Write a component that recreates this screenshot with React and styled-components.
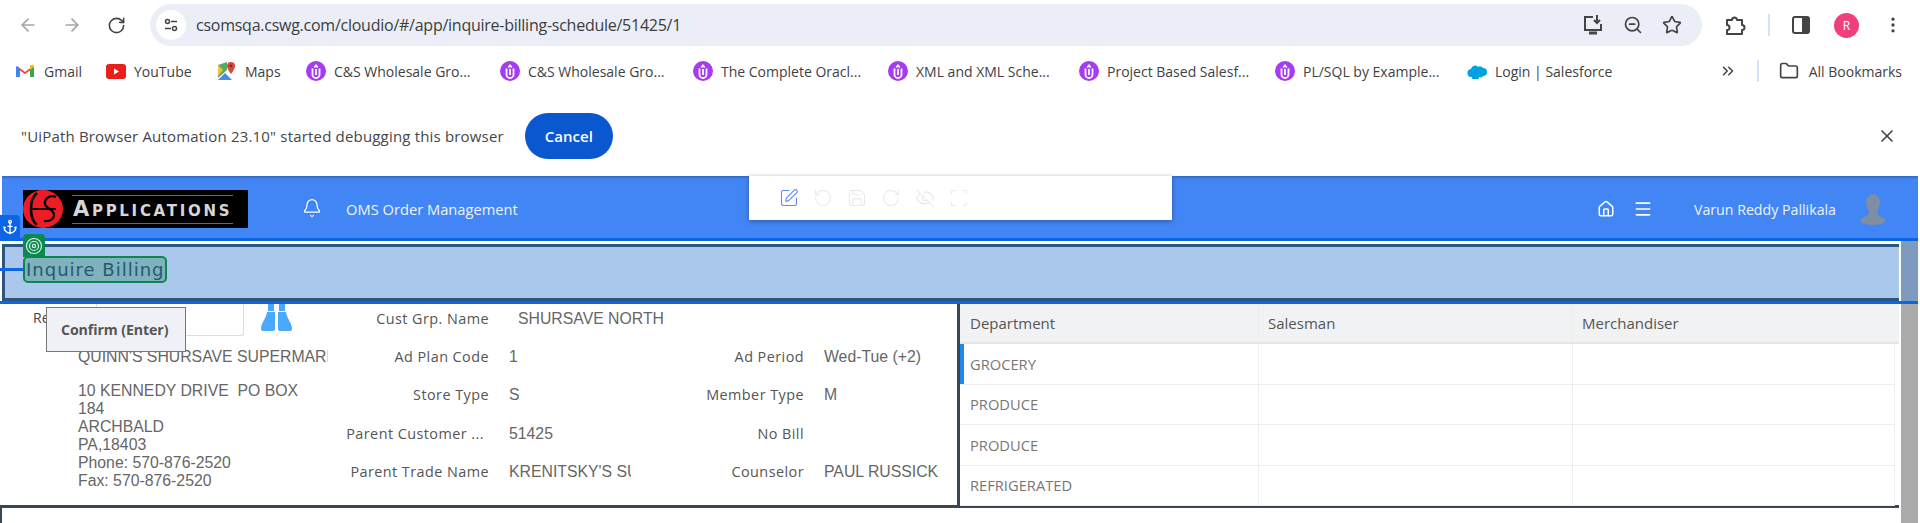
import React from 'react';
import styled, { createGlobalStyle } from 'styled-components';
import {
    ArrowLeft, ArrowRight, RotateCw, RotateCcw, ZoomOut, Star, X, Folder,
    ChevronsRight, Bell, Home, Menu, SquarePen, Save, EyeOff, Scan, Anchor, MoreVertical,
} from 'lucide-react';

const GlobalStyle = createGlobalStyle`
    html, body {
        margin: 0;
        background: #fff;
    }
    body {
        width: 1920px;
        height: 523px;
        overflow: hidden;
        font-family: "Open Sans", sans-serif;
    }
`;

const Page = styled.div`
    position: relative;
    width: 1920px;
    height: 523px;
    overflow: hidden;
`;

/* browser chrome */
const Toolbar = styled.div`
    display: flex;
    align-items: center;
    height: 50px;
    box-sizing: border-box;
    padding-left: 18px;
    color: #5f6368;
`;

const NavIcon = styled.span`
    display: flex;
    justify-content: center;
    width: 20px;
    margin-right: 24px;
    color: ${p => p.$color || '#a3a5a8'};
`;

const AddressBar = styled.div`
    display: flex;
    align-items: center;
    width: 1552px;
    height: 42px;
    border-radius: 21px;
    background: #ebeef7;
    box-sizing: border-box;
    padding: 0 20px 0 6px;
`;

const SiteBadge = styled.span`
    display: flex;
    align-items: center;
    justify-content: center;
    width: 30px;
    height: 30px;
    border-radius: 50%;
    background: #fff;
    margin-right: 10px;
`;

const Url = styled.span`
    flex: 1;
    font-size: 16px;
    color: #3b3d40;
    letter-spacing: -0.25px;
`;

const BarIcons = styled.div`
    display: flex;
    align-items: center;
    gap: 19px;
    color: #444;
`;

const ToolIcons = styled.div`
    display: flex;
    align-items: center;
    margin-left: 22px;
    color: #444;
`;

const Divider = styled.span`
    width: 2px;
    height: 22px;
    background: #d3e3fd;
    margin: 0 ${p => p.$mx || 22}px;
`;

const ProfileDot = styled.span`
    display: flex;
    align-items: center;
    justify-content: center;
    width: 25px;
    height: 25px;
    border-radius: 50%;
    background: #ef3f7c;
    color: #fff;
    font-size: 12px;
    margin: 0 24px;
`;

const Bookmarks = styled.div`
    display: flex;
    align-items: center;
    height: 42px;
    padding-left: 16px;
    box-sizing: border-box;
`;

const Bookmark = styled.div`
    display: flex;
    align-items: center;
    gap: 8px;
    width: ${p => p.$w}px;
    flex: none;
    font-size: 14px;
    color: #3f4145;
    white-space: nowrap;
`;

const IconSlot = styled.span`
    display: flex;
    align-items: center;
    width: 20px;
    flex: none;
`;

const BookmarkEnd = styled.div`
    display: flex;
    align-items: center;
    margin-left: auto;
    padding-right: 18px;
    font-size: 14px;
    color: #3f4145;
    gap: 10px;
`;

const InfoBar = styled.div`
    display: flex;
    align-items: center;
    height: 84px;
    padding: 4px 23px 0 21px;
    box-sizing: border-box;
    font-size: 15px;
    letter-spacing: .18px;
    color: #44474a;
`;

const CancelButton = styled.button`
    width: 88px;
    height: 46px;
    margin-left: 21px;
    margin-right: auto;
    border: 0;
    border-radius: 23px;
    background: #0b57d0;
    color: #fff;
    font-family: "Open Sans", sans-serif;
    font-size: 15px;
    font-weight: 600;
`;

/* app header */
const AppFrame = styled.div`
    margin-left: 2px;
    width: 1916px;
`;

const AppHeader = styled.header`
    display: flex;
    align-items: center;
    height: 62px;
    padding-left: 21px;
    box-sizing: border-box;
    background: #4285f4;
    color: #fff;
    font-size: 14.7px;
    box-shadow: inset 0 3px 3px -2px rgba(30, 60, 120, .5);
`;

const Logo = styled.div`
    display: flex;
    align-items: center;
    width: 225px;
    height: 38px;
    flex: none;
    background: #000;
    margin-top: 4px;
`;

const LogoWord = styled.div`
    margin-left: 9px;
    width: 161px;
    box-sizing: border-box;
    padding: 4px 0 4px 1px;
    border-top: 1px solid #666;
    border-bottom: 1px solid #666;
    font-family: "DejaVu Sans", sans-serif;
    font-weight: 700;
    font-size: 21px;
    font-variant: small-caps;
    letter-spacing: 2.7px;
    line-height: 19px;
    color: #d6d6d6;
    white-space: nowrap;
`;

const BellSlot = styled.span`
    display: flex;
    margin-left: 54px;
    margin-top: 2px;
`;

const ModuleName = styled.span`
    margin-left: 24px;
    margin-top: 4px;
    color: #eef4ff;
`;

const EditTools = styled.div`
    display: flex;
    align-items: center;
    gap: 14px;
    width: 423px;
    height: 44px;
    flex: none;
    align-self: flex-start;
    box-sizing: border-box;
    padding-left: 30px;
    margin-left: 231px;
    background: #fff;
    box-shadow: 0 1px 5px rgba(0, 0, 0, .35);
`;

const EditIcon = styled.span`
    display: flex;
    color: ${p => (p.$active ? '#5b8def' : '#e9e9e9')};
`;

const HeaderRight = styled.div`
    display: flex;
    align-items: center;
    margin-left: auto;
    margin-top: 4px;
    padding-right: 32px;
`;

const MenuSlot = styled.span`
    display: flex;
    margin-left: 18px;
`;

const UserName = styled.span`
    margin: 0 24px 0 41px;
    font-size: 14.2px;
    color: #eef4ff;
`;

/* title band, framed by the automation highlight */
const TitleBand = styled.div`
    position: relative;
    z-index: 2;
    height: 66px;
    box-sizing: border-box;
    border-top: 3px solid #0a66e4;
    border-bottom: 3px solid #0a66e4;
    padding: 3px 19px 0 0;
    background: #fff;
    margin-left: -2px;
`;

const BandInner = styled.div`
    height: 57px;
    box-sizing: border-box;
    border: 3px solid #2e5480;
    border-right: 0;
    background: #a9c8ec;
    margin-left: 2px;
`;

const ScrollPart = styled.div`
    position: absolute;
    right: 0;
    top: 0;
    bottom: 0;
    width: 17px;
    background: #7d9bbf;
`;

const Title = styled.div`
    position: absolute;
    left: 23px;
    top: 15px;
    width: 144px;
    height: 27px;
    box-sizing: border-box;
    border: 2.5px solid #0e8552;
    border-radius: 5px;
    background: #7fb2bc;
    color: #245a70;
    font-family: "DejaVu Sans", sans-serif;
    font-size: 18px;
    line-height: 24px;
    padding-left: 1px;
    letter-spacing: 1px;
    white-space: nowrap;
`;

const Connector = styled.span`
    position: absolute;
    left: 0;
    top: 27px;
    width: 23px;
    height: 3px;
    background: #0a66e4;
`;

const AnchorTag = styled.span`
    position: absolute;
    z-index: 3;
    left: 0;
    top: 215px;
    width: 20px;
    height: 24px;
    display: flex;
    align-items: center;
    justify-content: center;
    background: #0a66e4;
    color: #fff;
    border-radius: 0 4px 0 0;
`;

const TargetTag = styled.span`
    position: absolute;
    z-index: 3;
    left: 23px;
    top: 234px;
    width: 22px;
    height: 23px;
    display: flex;
    align-items: center;
    justify-content: center;
    background: #0b8a50;
    border-radius: 4px 4px 0 0;
`;

/* record */
const Lower = styled.div`
    display: flex;
    height: 219px;
`;

const LowerMain = styled.div`
    width: 1897px;
    flex: none;
`;

const Content = styled.div`
    display: flex;
    height: 201px;
    background: #fff;
`;

const LeftPane = styled.div`
    display: flex;
    width: 955px;
    flex: none;
    overflow: hidden;
`;

const CustomerCol = styled.div`
    width: 336px;
    flex: none;
`;

const SearchRow = styled.div`
    display: flex;
    align-items: flex-start;
    height: 32px;
    padding-left: 31px;
    font-size: 14px;
    line-height: 28px;
    color: #444;
`;

const RefInput = styled.div`
    width: 148px;
    height: 32px;
    box-sizing: border-box;
    margin-left: 46px;
    margin-right: 17px;
    border: 1px solid #ddd;
    border-top: 0;
    border-radius: 0 0 3px 3px;
`;

const CustomerName = styled.div`
    width: 250px;
    margin: 12px 0 0 76px;
    font-family: "Liberation Sans", sans-serif;
    font-size: 15.8px;
    line-height: 18px;
    color: #666;
    white-space: nowrap;
    overflow: hidden;
`;

const Address = styled.div`
    width: 228px;
    margin: 16px 0 0 76px;
    font-family: "Liberation Sans", sans-serif;
    font-size: 15.8px;
    line-height: 18px;
    color: #666;
`;

const FieldGrid = styled.div`
    display: grid;
    grid-template-columns: 151px 142px 173px 150px;
    grid-auto-rows: 38.3px;
    align-items: center;
    margin-top: -5px;
    flex: none;
`;

const FieldLabel = styled.div`
    text-align: right;
    font-size: 14.4px;
    letter-spacing: .45px;
    color: #555;
    white-space: nowrap;
    overflow: hidden;
    padding-right: ${p => p.$pr || 0}px;
`;

const FieldValue = styled.div`
    grid-column: ${p => p.$span ? 'span 3' : 'auto'};
    padding-left: ${p => p.$pl || 20}px;
    padding-top: 1px;
    font-family: "Liberation Sans", sans-serif;
    font-size: 15.8px;
    color: #666;
    white-space: nowrap;
    overflow: hidden;
`;

const PaneRule = styled.div`
    width: 3px;
    flex: none;
    background: #3a4656;
`;

const DeptTable = styled.div`
    width: 939px;
    flex: none;
`;

const Row = styled.div`
    display: grid;
    grid-template-columns: 298px 314px 1fr;
    height: ${p => (p.$head ? 40 : 40.5)}px;
    box-sizing: border-box;
    background: ${p => (p.$head ? '#f1f2f4' : '#fff')};
    border-bottom: ${p => (p.$head ? '2px solid #e4e5e8' : '1px solid #eeeeee')};
    border-right: ${p => (p.$head ? '0' : '1px solid #eeeeee')};
    margin-right: ${p => (p.$head ? 0 : 4)}px;
    color: ${p => (p.$head ? '#555' : '#777')};
`;

const Cell = styled.div`
    display: flex;
    align-items: center;
    padding-left: ${p => (p.$first && !p.$mark ? 10 : p.$mark ? 6 : 9)}px;
    border-left: ${p => (p.$mark ? '4px solid #1e88f0' : p.$first ? '0' : '1px solid #eeeeee')};
    font-size: ${p => (p.$head ? 15 : 14.7)}px;
    white-space: nowrap;
`;

const ScrollRail = styled.div`
    width: 17px;
    flex: none;
    margin-left: 2px;
    background: #aaaaaa;
`;

const Footer = styled.div`
    height: 18px;
    box-sizing: border-box;
    border-top: 3px solid #3a4656;
    border-left: 2px solid #3a4656;
    margin-left: -2px;
`;

const Tooltip = styled.div`
    position: absolute;
    z-index: 4;
    left: 46px;
    top: 307px;
    width: 140px;
    height: 45px;
    box-sizing: border-box;
    display: flex;
    align-items: center;
    padding-left: 14px;
    border: 1px solid #777;
    background: #f0f1f7;
    color: #555;
    font-size: 14.2px;
    font-weight: 700;
    letter-spacing: -.1px;
`;

const GmailIcon = () => (
    <svg width="18" height="14" viewBox="0 0 18 14">
        <path d="M1 13V2l8 6 8-6v11h-3V6.5L9 10 4 6.5V13z" fill="#ea4335" />
        <path d="M0 13V2l4 2.8V13z" fill="#4285f4" />
        <path d="M18 13V2l-4 2.8V13z" fill="#34a853" />
        <path d="M14 1.5c2-1.5 4-1 4 1V3l-4 3z" fill="#fbbc04" />
    </svg>
);

const YouTubeIcon = () => (
    <svg width="20" height="15" viewBox="0 0 20 15">
        <rect x="0" y="0" width="20" height="15" rx="3" fill="#e8201a" />
        <path d="M8 4.5l5 3-5 3z" fill="#fff" />
    </svg>
);

const MapsIcon = () => (
    <svg width="19" height="20" viewBox="0 0 19 20">
        <path d="M1 4l9-3v8l-9 8z" fill="#4fae62" />
        <path d="M1 19l7-7 7 7z" fill="#4a8ae8" />
        <path d="M1 4l5 5-5 6z" fill="#f3c33c" />
        <path d="M14 1a4 4 0 0 1 4 4c0 3-4 8-4 8s-4-5-4-8a4 4 0 0 1 4-4z" fill="#d9493a" />
        <circle cx="14" cy="5" r="1.4" fill="#8c2a20" />
    </svg>
);

const PurpleIcon = () => (
    <svg width="20" height="20" viewBox="0 0 20 20">
        <circle cx="10" cy="10" r="10" fill="#a63cf0" />
        <path d="M6.5 7.5v6a3.5 3.5 0 0 0 7 0v-6" fill="none" stroke="#fff" strokeWidth="1.8" />
        <path d="M10 8v6M8.3 6.5L10 4.5l1.7 2" fill="none" stroke="#fff" strokeWidth="1.8" />
    </svg>
);

const CloudIcon = () => (
    <svg width="20" height="16" viewBox="0 0 20 16">
        <path d="M5 14a4 4 0 0 1-1-8 4 4 0 0 1 7-2 3.5 3.5 0 0 1 5 1 4 4 0 0 1 0 8 3 3 0 0 1-4 1 3.5 3.5 0 0 1-7 0z" fill="#00a1e0" />
    </svg>
);

const TuneIcon = () => (
    <svg width="16" height="16" viewBox="0 0 16 16" fill="none" stroke="#444" strokeWidth="1.5">
        <circle cx="4.5" cy="4.5" r="2" />
        <path d="M8 4.5h6" />
        <circle cx="11.5" cy="11.5" r="2" />
        <path d="M2 11.5h6" />
    </svg>
);

const InstallIcon = () => (
    <svg width="22" height="22" viewBox="0 0 22 22" fill="none" stroke="#444" strokeWidth="2">
        <path d="M11 3H3v13h16v-6" />
        <path d="M15 1v8M12 6l3 3 3-3" />
        <path d="M7 19h8" strokeWidth="3" />
    </svg>
);

const ExtensionIcon = () => (
    <svg width="22" height="22" viewBox="0 0 22 22" fill="none" stroke="#444" strokeWidth="2" strokeLinejoin="round">
        <path d="M3 6h5a2.5 2.5 0 0 1 5 0h5v5a2.5 2.5 0 0 1 0 5v4H3v-4a2.5 2.5 0 0 0 0-5z" />
    </svg>
);

const SidePanelIcon = () => (
    <svg width="18" height="18" viewBox="0 0 18 18">
        <rect x="1" y="1" width="16" height="16" rx="2" fill="#fff" stroke="#444" strokeWidth="2" />
        <rect x="10" y="1" width="7" height="16" fill="#444" />
    </svg>
);

const BinocularsIcon = () => (
    <svg width="31" height="27" viewBox="0 0 31 27" fill="#4aa8ff">
        <path d="M7 0h6v7H7zM18 0h6v7h-6z" />
        <path d="M6 8h8v17a2 2 0 0 1-2 2H2a2 2 0 0 1-2-2c0-6 5-10 6-17zM17 8h8c1 7 6 11 6 17a2 2 0 0 1-2 2H19a2 2 0 0 1-2-2z" />
    </svg>
);

const TargetIcon = () => (
    <svg width="18" height="18" viewBox="0 0 18 18" fill="none" stroke="#d8efe4" strokeWidth="1.2">
        <circle cx="9" cy="9" r="7.5" />
        <circle cx="9" cy="9" r="4.5" />
        <circle cx="9" cy="9" r="1.6" />
    </svg>
);

const AvatarIcon = () => (
    <svg width="26" height="31" viewBox="0 0 26 31" fill="#7f8ea3">
        <ellipse cx="13" cy="9" rx="7" ry="9" />
        <path d="M9 16h8l1 5c3 2 7 3 8 6-3 3-8 4-13 4S3 30 0 27c1-3 5-4 8-6z" />
    </svg>
);

const CsLogo = () => (
    <svg width="40" height="38" viewBox="0 0 40 38" style={{ flex: 'none' }}>
        <ellipse cx="20" cy="19" rx="20" ry="19" fill="#ee1c25" />
        <path d="M14 3C6 9 6 29 14 35" fill="none" stroke="#000" strokeWidth="2.6" />
        <path d="M33 7c-6-3-12 2-11 7 1 5 9 5 9 11 0 4-5 7-10 6" fill="none" stroke="#000" strokeWidth="2.2" />
        <path d="M9 19h24" stroke="#000" strokeWidth="1.8" />
    </svg>
);

const bookmarks = [
    { w: 90, icon: <GmailIcon />, label: 'Gmail' },
    { w: 111, icon: <YouTubeIcon />, label: 'YouTube' },
    { w: 89, icon: <MapsIcon />, label: 'Maps' },
    { w: 194, icon: <PurpleIcon />, label: 'C&S Wholesale Gro...' },
    { w: 193, icon: <PurpleIcon />, label: 'C&S Wholesale Gro...' },
    { w: 195, icon: <PurpleIcon />, label: 'The Complete Oracl...' },
    { w: 191, icon: <PurpleIcon />, label: 'XML and XML Sche...' },
    { w: 196, icon: <PurpleIcon />, label: 'Project Based Salesf...' },
    { w: 192, icon: <PurpleIcon />, label: 'PL/SQL by Example...' },
    { w: 230, icon: <CloudIcon />, label: 'Login | Salesforce' },
];

const departments = ['GROCERY', 'PRODUCE', 'PRODUCE', 'REFRIGERATED'];

export default function App () {
    return (
        <Page>
            <GlobalStyle />

            <Toolbar>
                <NavIcon><ArrowLeft size={20} /></NavIcon>
                <NavIcon><ArrowRight size={20} /></NavIcon>
                <NavIcon $color="#444"><RotateCw size={19} /></NavIcon>
                <AddressBar>
                    <SiteBadge><TuneIcon /></SiteBadge>
                    <Url>csomsqa.cswg.com/cloudio/#/app/inquire-billing-schedule/51425/1</Url>
                    <BarIcons>
                        <InstallIcon />
                        <ZoomOut size={20} />
                        <Star size={20} />
                    </BarIcons>
                </AddressBar>
                <ToolIcons>
                    <ExtensionIcon />
                    <Divider />
                    <SidePanelIcon />
                    <ProfileDot>R</ProfileDot>
                    <MoreVertical size={20} />
                </ToolIcons>
            </Toolbar>

            <Bookmarks>
                {bookmarks.map(b => (
                    <Bookmark key={b.label + b.w} $w={b.w}>
                        <IconSlot>{b.icon}</IconSlot>
                        {b.label}
                    </Bookmark>
                ))}
                <BookmarkEnd>
                    <ChevronsRight size={18} color="#444" />
                    <Divider $mx={10} />
                    <Folder size={20} color="#444" />
                    All Bookmarks
                </BookmarkEnd>
            </Bookmarks>

            <InfoBar>
                "UiPath Browser Automation 23.10" started debugging this browser
                <CancelButton>Cancel</CancelButton>
                <X size={20} color="#444" />
            </InfoBar>

            <AppFrame>
                <AppHeader>
                    <Logo>
                        <CsLogo />
                        <LogoWord>Applications</LogoWord>
                    </Logo>
                    <BellSlot><Bell size={20} strokeWidth={1.5} /></BellSlot>
                    <ModuleName>OMS Order Management</ModuleName>
                    <EditTools>
                        <EditIcon $active><SquarePen size={20} strokeWidth={1.3} /></EditIcon>
                        <EditIcon><RotateCcw size={20} strokeWidth={1.3} /></EditIcon>
                        <EditIcon><Save size={20} strokeWidth={1.3} /></EditIcon>
                        <EditIcon><RotateCw size={20} strokeWidth={1.3} /></EditIcon>
                        <EditIcon><EyeOff size={20} strokeWidth={1.3} /></EditIcon>
                        <EditIcon><Scan size={20} strokeWidth={1.3} /></EditIcon>
                    </EditTools>
                    <HeaderRight>
                        <Home size={18} strokeWidth={2} />
                        <MenuSlot><Menu size={20} strokeWidth={2} /></MenuSlot>
                        <UserName>Varun Reddy Pallikala</UserName>
                        <AvatarIcon />
                    </HeaderRight>
                </AppHeader>

                <TitleBand>
                    <BandInner />
                    <ScrollPart />
                    <Connector />
                    <Title>Inquire Billing</Title>
                </TitleBand>

                <Lower>
                    <LowerMain>
                        <Content>
                            <LeftPane>
                                <CustomerCol>
                                    <SearchRow>
                                        Re
                                        <RefInput />
                                        <BinocularsIcon />
                                    </SearchRow>
                                    <CustomerName>QUINN'S SHURSAVE SUPERMARKET</CustomerName>
                                    <Address>
                                        10 KENNEDY DRIVE&nbsp; PO BOX 184<br />
                                        ARCHBALD<br />
                                        PA,18403<br />
                                        Phone: 570-876-2520<br />
                                        Fax: 570-876-2520
                                    </Address>
                                </CustomerCol>
                                <FieldGrid>
                                    <FieldLabel>Cust Grp. Name</FieldLabel>
                                    <FieldValue $pl={29} $span>SHURSAVE NORTH</FieldValue>
                                    <FieldLabel>Ad Plan Code</FieldLabel>
                                    <FieldValue>1</FieldValue>
                                    <FieldLabel>Ad Period</FieldLabel>
                                    <FieldValue>Wed-Tue (+2)</FieldValue>
                                    <FieldLabel>Store Type</FieldLabel>
                                    <FieldValue>S</FieldValue>
                                    <FieldLabel>Member Type</FieldLabel>
                                    <FieldValue>M</FieldValue>
                                    <FieldLabel $pr={5}>Parent Customer ...</FieldLabel>
                                    <FieldValue>51425</FieldValue>
                                    <FieldLabel>No Bill</FieldLabel>
                                    <FieldValue />
                                    <FieldLabel>Parent Trade Name</FieldLabel>
                                    <FieldValue>KRENITSKY'S SUPERMARKET</FieldValue>
                                    <FieldLabel>Counselor</FieldLabel>
                                    <FieldValue>PAUL RUSSICK</FieldValue>
                                </FieldGrid>
                            </LeftPane>
                            <PaneRule />
                            <DeptTable>
                                <Row $head>
                                    <Cell $first $head>Department</Cell>
                                    <Cell $head>Salesman</Cell>
                                    <Cell $head>Merchandiser</Cell>
                                </Row>
                                {departments.map((d, i) => (
                                    <Row key={d + i}>
                                        <Cell $first $mark={i === 0}>{d}</Cell>
                                        <Cell />
                                        <Cell />
                                    </Row>
                                ))}
                            </DeptTable>
                        </Content>
                        <Footer />
                    </LowerMain>
                    <ScrollRail />
                </Lower>
            </AppFrame>

            <AnchorTag><Anchor size={16} /></AnchorTag>
            <TargetTag><TargetIcon /></TargetTag>
            <Tooltip>Confirm (Enter)</Tooltip>
        </Page>
    );
}
